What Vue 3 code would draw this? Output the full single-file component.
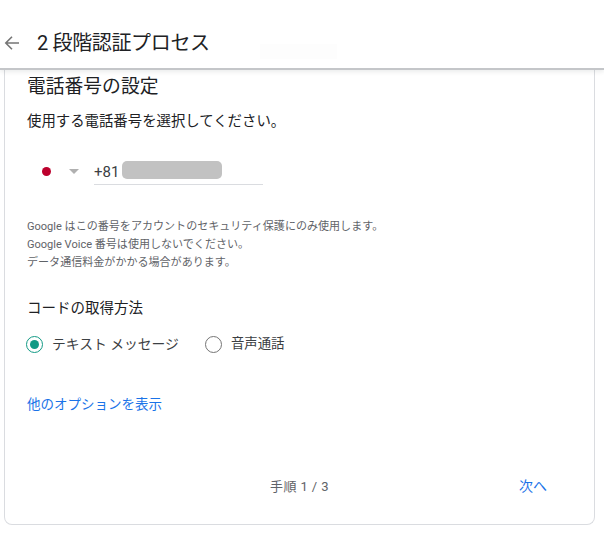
<script setup>
const notes = [
  'Google はこの番号をアカウントのセキュリティ保護にのみ使用します。',
  'Google Voice 番号は使用しないでください。',
  'データ通信料金がかかる場合があります。'
]
</script>

<template>
  <div class="page">
    <header class="topbar">
      <svg class="back" width="16" height="16" viewBox="0 0 16 16" fill="none" stroke="#757575" stroke-width="1.6">
        <path d="M15 8H2M8 1.8 1.8 8 8 14.2" />
      </svg>
      <h1 class="title">2 段階認証プロセス</h1>
      <span class="smudge"></span>
    </header>
    <main class="card">
      <h2 class="heading">電話番号の設定</h2>
      <p class="lead">使用する電話番号を選択してください。</p>
      <div class="phone">
        <span class="flag"></span>
        <span class="caret"></span>
        <div class="field">
          <span class="code">+81</span>
          <span class="redact"></span>
        </div>
      </div>
      <div class="notes">
        <p v-for="n in notes" :key="n">{{ n }}</p>
      </div>
      <h3 class="sub">コードの取得方法</h3>
      <div class="radios">
        <label class="radio">
          <span class="ring on"><span class="dot"></span></span>
          <span>テキスト メッセージ</span>
        </label>
        <label class="radio voice">
          <span class="ring"></span>
          <span>音声通話</span>
        </label>
      </div>
      <a class="more">他のオプションを表示</a>
      <footer class="foot">
        <span class="step">手順 1 / 3</span>
        <a class="next">次へ</a>
      </footer>
    </main>
  </div>
</template>

<style>
html, body { margin: 0; background: #fff; }
</style>

<style scoped>
.page {
  width: 604px;
  height: 538px;
  overflow: hidden;
  display: flex;
  flex-direction: column;
  font-family: Roboto, "Noto Sans CJK JP", sans-serif;
  color: #202124;
}
.topbar {
  flex: none;
  height: 70px;
  box-sizing: border-box;
  padding: 18px 0 0 4px;
  display: flex;
  align-items: center;
  border-bottom: 2px solid #c4c6c9;
  box-shadow: 0 2px 4px rgba(60, 64, 67, 0.1);
  position: relative;
  z-index: 1;
  background: #fff;
}
.back { flex: none; }
.title {
  margin: 0 0 0 17px;
  font-size: 20px;
  font-weight: 400;
  line-height: 28px;
  letter-spacing: -0.35px;
}
.smudge {
  position: absolute;
  left: 260px;
  top: 44px;
  width: 77px;
  height: 15px;
  background: #fdfdfd;
}
.card {
  flex: none;
  height: 455px;
  box-sizing: border-box;
  margin-left: 4px;
  width: 591px;
  border: 1px solid #dadce0;
  border-top: 0;
  border-radius: 0 0 8px 8px;
  padding: 4px 22px 0;
  display: flex;
  flex-direction: column;
}
.heading {
  margin: 0;
  font-size: 18.8px;
  font-weight: 400;
  line-height: 26px;
}
.lead {
  margin: 12px 0 0;
  font-size: 14.4px;
  line-height: 20px;
}
.phone {
  display: flex;
  align-items: center;
  height: 30px;
  margin-top: 24px;
  padding-left: 15px;
}
.flag {
  width: 9px;
  height: 9px;
  border-radius: 50%;
  background: #bc002d;
}
.caret {
  margin-left: 18px;
  border-left: 5px solid transparent;
  border-right: 5px solid transparent;
  border-top: 5px solid #b0b0b0;
}
.field {
  margin-left: 15px;
  width: 169px;
  height: 29px;
  align-self: flex-start;
  box-sizing: border-box;
  border-bottom: 1px solid #dadce0;
  display: flex;
  align-items: center;
}
.code {
  font-size: 15px;
  color: #3c4043;
  padding-top: 3px;
}
.redact {
  width: 100px;
  height: 18px;
  margin-left: 3px;
  border-radius: 5px;
  background: #c2c2c2;
}
.notes {
  margin-top: 32px;
  font-size: 11.06px;
  line-height: 18px;
  color: #5f6368;
}
.notes p { margin: 0; }
.sub {
  margin: 27px 0 0;
  font-size: 14.5px;
  font-weight: 400;
  line-height: 20px;
}
.radios {
  display: flex;
  gap: 26px;
  margin: 15px 0 0 -1px;
}
.radio {
  display: flex;
  align-items: center;
  gap: 9px;
  font-size: 13.8px;
  line-height: 20px;
  color: #3c4043;
}
.voice { font-size: 13.4px; }
.ring {
  width: 17px;
  height: 17px;
  box-sizing: border-box;
  border: 1.5px solid #757575;
  border-radius: 50%;
  display: flex;
  align-items: center;
  justify-content: center;
}
.ring.on { border-color: #129a85; }
.dot {
  width: 9px;
  height: 9px;
  border-radius: 50%;
  background: #129a85;
}
.more {
  margin-top: 40px;
  font-size: 13.5px;
  line-height: 20px;
  color: #1a73e8;
}
.foot {
  display: flex;
  align-items: center;
  margin-top: 61px;
  height: 20px;
  padding-left: 243px;
  font-size: 13px;
}
.step {
  color: #5f6368;
  letter-spacing: 0.4px;
}
.next {
  margin-left: auto;
  margin-right: 25px;
  font-size: 14px;
  color: #1a73e8;
}
</style>
